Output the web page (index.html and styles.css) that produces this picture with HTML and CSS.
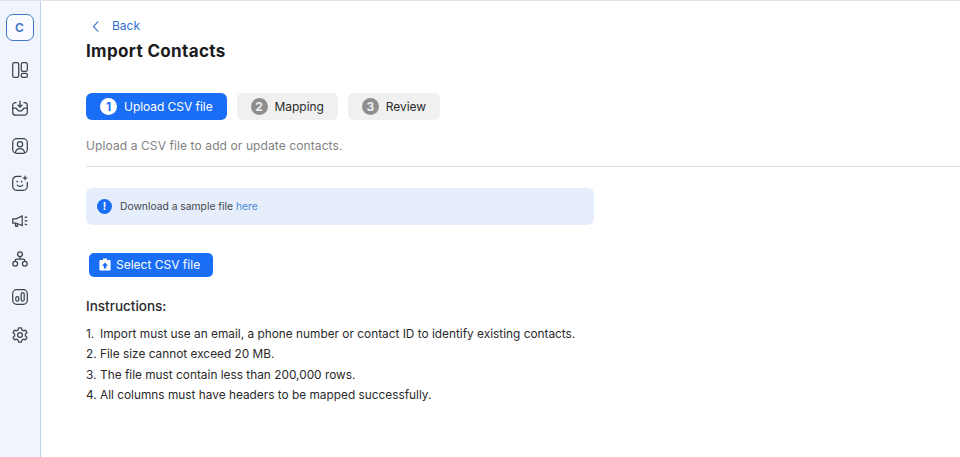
FILE: index.html
```html
<!DOCTYPE html>
<html lang="en">
<head>
<meta charset="utf-8">
<title>Import Contacts</title>
<link rel="stylesheet" href="styles.css">
</head>
<body>
<div class="app">
  <nav class="rail">
    <div class="logo">C</div>
    <svg class="ico" viewBox="0 0 16 16"><rect x="0.7" y="0.7" width="6" height="14.6" rx="1.6"/><rect x="9.3" y="0.7" width="6" height="8.6" rx="1.6"/><rect x="9.3" y="11.3" width="6" height="4" rx="1.4"/></svg>
    <svg class="ico" viewBox="0 0 16 16"><path d="M4.5 2.6 H3.5 A2.8 2.8 0 0 0 0.7 5.4 V12.2 A3 3 0 0 0 3.7 15.2 H12.3 A3 3 0 0 0 15.3 12.2 V5.4 A2.8 2.8 0 0 0 12.5 2.6 H11.5"/><path d="M0.9 8 H3.6 C5 8 4.8 11 8 11 C11.2 11 11 8 12.4 8 H15.1"/><path d="M8 0.6 V7 M5.7 4.8 L8 7.1 L10.3 4.8"/></svg>
    <svg class="ico" viewBox="0 0 16 16"><rect x="0.7" y="0.7" width="14.6" height="14.6" rx="4"/><circle cx="8" cy="6.2" r="2.6"/><path d="M3.4 14.8 C3.8 11.6 5.6 10.6 8 10.6 C10.4 10.6 12.2 11.6 12.6 14.8"/></svg>
    <svg class="ico" viewBox="0 0 16 16"><path d="M9.5 1.3 H4.7 A4 4 0 0 0 0.7 5.3 V11.3 A4 4 0 0 0 4.7 15.3 H11.3 A4 4 0 0 0 15.3 11.3 V7"/><path d="M5 9.8 C6.2 12 9.8 12 11 9.8"/><circle class="dot" cx="5.2" cy="6.6" r="0.9"/><circle class="dot" cx="9.6" cy="6.6" r="0.9"/><path class="dot" d="M13 0 L13.8 2.2 L16 3 L13.8 3.8 L13 6 L12.2 3.8 L10 3 L12.2 2.2 Z"/></svg>
    <svg class="ico" viewBox="0 0 16 16"><path d="M0.8 5.8 H4 L10.2 3 V12.6 L4 10 H0.8 Z"/><path d="M3.2 10.2 L3.8 13.4 H5.6 L5.2 10.6"/><path d="M12.6 4.6 L15 3.8 M12.6 7.8 H15.4 M12.6 11 L15 11.8"/></svg>
    <svg class="ico" viewBox="0 0 16 16"><circle cx="8" cy="3.2" r="2.4"/><circle cx="3.2" cy="12.8" r="2.4"/><circle cx="12.8" cy="12.8" r="2.4"/><path d="M8 5.6 V8 M3.2 10.4 V9.6 A1.6 1.6 0 0 1 4.8 8 H11.2 A1.6 1.6 0 0 1 12.8 9.6 V10.4"/></svg>
    <svg class="ico" viewBox="0 0 16 16"><rect x="0.7" y="0.7" width="14.6" height="14.6" rx="4"/><rect x="3.8" y="7.6" width="3" height="4.6" rx="1.5"/><rect x="9.2" y="3.6" width="3" height="8.6" rx="1.5"/></svg>
    <svg class="ico" viewBox="0 0 16 16"><path d="M6.6 0.8 H9.4 L9.9 2.9 L11.5 3.8 L13.6 3.2 L15 5.6 L13.4 7.1 V8.9 L15 10.4 L13.6 12.8 L11.5 12.2 L9.9 13.1 L9.4 15.2 H6.6 L6.1 13.1 L4.5 12.2 L2.4 12.8 L1 10.4 L2.6 8.9 V7.1 L1 5.6 L2.4 3.2 L4.5 3.8 L6.1 2.9 Z" stroke-linejoin="round"/><circle cx="8" cy="8" r="2.4"/></svg>
  </nav>
  <main class="main">
    <a class="back" href="#">
      <svg class="chev" viewBox="0 0 8 14"><path d="M6.5 1.5 L1.2 7 L6.5 12.5"/></svg>
      <span>Back</span>
    </a>
    <h1 class="title">Import Contacts</h1>
    <div class="steps">
      <div class="step active"><span class="num">1</span>Upload CSV file</div>
      <div class="step"><span class="num">2</span>Mapping</div>
      <div class="step"><span class="num">3</span>Review</div>
    </div>
    <p class="sub">Upload a CSV file to add or update contacts.</p>
    <hr class="rule">
    <div class="note">
      <span class="bang">!</span>
      <span>Download a sample file <a class="link" href="#">here</a></span>
    </div>
    <button class="upload">
      <svg class="clip" viewBox="0 0 12 13"><path d="M4 0.5 H8 V2 H10.6 A1 1 0 0 1 11.6 3 V11.6 A1 1 0 0 1 10.6 12.6 H1.4 A1 1 0 0 1 0.4 11.6 V3 A1 1 0 0 1 1.4 2 H4 Z"/><path class="arrow" d="M6 4.6 L9 7.8 H7.2 V10.6 H4.8 V7.8 H3 Z"/></svg>
      Select CSV file
    </button>
    <h2 class="head">Instructions:</h2>
    <ol class="list">
      <li><span class="n">1.</span>Import must use an email, a phone number or contact ID to identify existing contacts.</li>
      <li><span class="n">2.</span>File size cannot exceed 20 MB.</li>
      <li><span class="n">3.</span>The file must contain less than 200,000 rows.</li>
      <li><span class="n">4.</span>All columns must have headers to be mapped successfully.</li>
    </ol>
  </main>
</div>
</body>
</html>
```

FILE: styles.css
```css
* { box-sizing: border-box; }
html, body { margin: 0; height: 100%; overflow: hidden; background: #fff; }
body { font-family: Inter, "Liberation Sans", sans-serif; color: #1f1f21; }
.app { display: flex; height: 457px; border-top: 1px solid #e2e2e2; }
.rail { width: 41px; flex: none; background: #eff4fd; border-right: 1px solid #bfd0e8; display: flex; flex-direction: column; align-items: center; padding: 13px 1px 0 0; }
.logo { width: 28px; height: 27px; border: 1.3px solid #3f78c9; border-radius: 7px; background: #f9fbff; color: #3b74c4; font-size: 12px; font-weight: 600; display: flex; align-items: center; justify-content: center; margin-bottom: 21px; }
.ico { width: 16px; height: 16px; margin-bottom: 21.8px; fill: none; stroke: #3d434c; stroke-width: 1.25; flex: none; }
.ico .dot { fill: #3d434c; stroke: none; }
.main { flex: 1; min-width: 0; padding: 17px 0 0 45px; }
.back { display: flex; align-items: center; gap: 12px; color: #2f6fd0; font-size: 12px; line-height: 16px; text-decoration: none; padding-left: 6px; height: 16px; }
.chev { width: 8px; height: 13px; fill: none; stroke: #3c78d0; stroke-width: 1.2; }
.title { margin: 6px 0 0; font-size: 17px; line-height: 22px; font-weight: 700; color: #1b1b1d; letter-spacing: 0.35px; }
.steps { display: flex; gap: 10px; margin-top: 31px; }
.step { height: 27px; padding: 0 14px; border-radius: 6px; background: #f0f0f0; display: flex; align-items: center; gap: 7px; font-size: 12px; letter-spacing: -0.05px; color: #2a2a2c; }
.step.active { background: #1a6ef5; color: #fff; }
.num { width: 17px; height: 17px; border-radius: 50%; background: #8e8e8e; color: #f0f0f0; font-size: 12px; font-weight: 700; display: flex; align-items: center; justify-content: center; }
.active .num { background: #fff; color: #1a6ef5; }
.sub { margin: 18px 0 0; font-size: 12px; line-height: 16px; color: #828282; letter-spacing: 0.1px; }
.rule { margin: 12px 0 0; border: 0; border-top: 1px solid #dcdcdc; }
.note { width: 508px; height: 37px; margin-top: 21px; padding: 0 0 1px 11px; border-radius: 6px; background: #e6eefb; display: flex; align-items: center; gap: 8px; font-size: 10.3px; color: #43474f; }
.bang { width: 15px; height: 15px; border-radius: 50%; background: #1a6ef5; color: #fff; font-size: 10px; font-weight: 700; display: flex; align-items: center; justify-content: center; }
.link { color: #4d8ad6; text-decoration: none; }
.upload { display: flex; align-items: center; gap: 5px; width: 124px; height: 24px; margin: 28px 0 0 3px; padding: 0 0 1px 10px; border: 0; border-radius: 5px; background: #1a6ef5; color: #fff; font: 12px Inter, "Liberation Sans", sans-serif; }
.clip { width: 12px; height: 13px; fill: #fff; }
.clip .arrow { fill: #1a6ef5; }
.head { margin: 21px 0 0; font-size: 13.5px; line-height: 17px; font-weight: 500; color: #2a2a2c; }
.list { list-style: none; margin: 9px 0 0; padding: 0; font-size: 11.85px; color: #2a2a2c; }
.list li { display: flex; line-height: 20.4px; }
.n { width: 14px; flex: none; }
```
